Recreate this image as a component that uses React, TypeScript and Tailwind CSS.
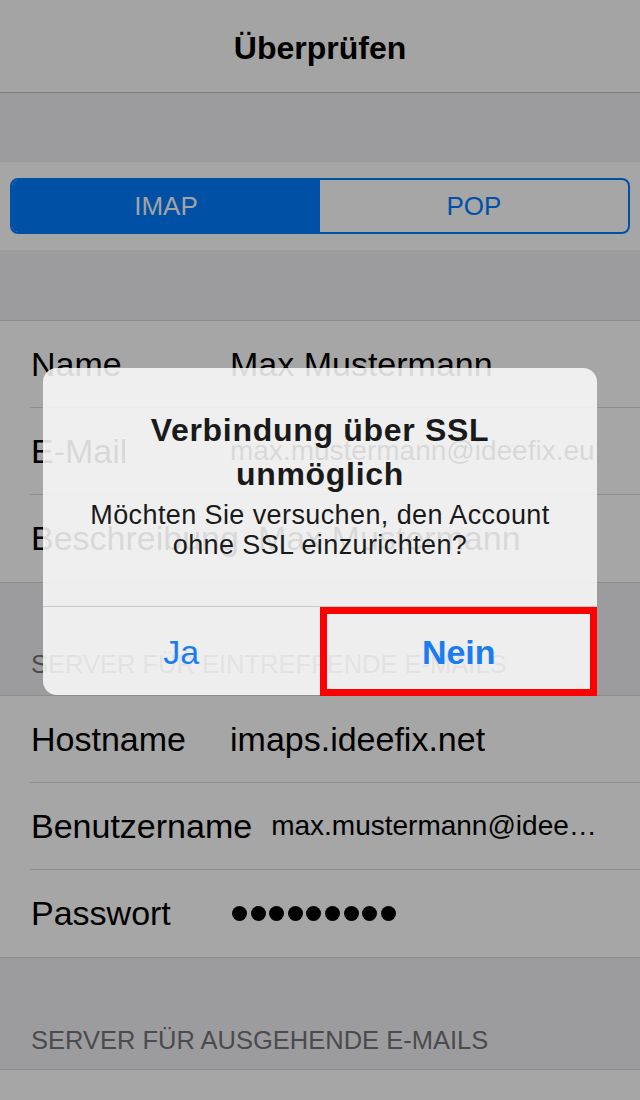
import React from "react";

function Row({ label, value, valueClass, h }: { label: string; value: React.ReactNode; valueClass?: string; h: string }) {
  return (
    <div className={`flex items-center pl-[31px] pr-[42px] ${h}`}>
      <div className="min-w-[180px] text-[34px] text-black whitespace-nowrap">{label}</div>
      <div className={`ml-[19px] whitespace-nowrap overflow-hidden text-black ${valueClass ?? "text-[34px]"}`}>{value}</div>
    </div>
  );
}

function Sep() {
  return <div className="ml-[30px] h-px bg-[#8d8d8d]" />;
}

export default function App() {
  return (
    <div className="relative w-[640px] h-[1100px] overflow-hidden bg-[#9c9c9e] font-['Liberation_Sans',Arial,sans-serif]">
      {/* Nav bar */}
      <div className="h-[93px] bg-[#a4a4a4] border-b border-[#7d7d7d] flex items-center justify-center pt-[4px]">
        <span className="text-[32px] font-bold text-black">Überprüfen</span>
      </div>
      <div className="h-[69px]" />
      {/* Segment band */}
      <div className="h-[88px] bg-[#a6a6a6] px-[10px] pt-[16px]">
        <div className="flex h-[56px] rounded-[8px] border-2 border-[#0051a6] overflow-hidden">
          <div className="flex-1 bg-[#0051a6] flex items-center justify-center text-[26px] text-[#a3a3a3]">IMAP</div>
          <div className="flex-1 flex items-center justify-center text-[26px] text-[#0051a6]">POP</div>
        </div>
      </div>
      <div className="h-[70px]" />
      {/* Group 1 */}
      <div className="bg-[#a6a6a6] border-y border-[#8d8d8d]">
        <Row label="Name" value="Max Mustermann" h="h-[86px]" />
        <Sep />
        <Row label="E-Mail" value="max.mustermann@ideefix.eu" valueClass="text-[28px]" h="h-[86px]" />
        <Sep />
        <Row label="Beschreibung" value="Max Mustermann" h="h-[87px]" />
      </div>
      <div className="h-[112px] flex items-end pl-[31px] pb-[16px]">
        <span className="text-[25.5px] leading-[30px] text-[#4b4b4d]">SERVER FÜR EINTREFFENDE E-MAILS</span>
      </div>
      {/* Group 2 */}
      <div className="bg-[#a6a6a6] border-y border-[#8d8d8d]">
        <Row label="Hostname" value="imaps.ideefix.net" h="h-[86px]" />
        <Sep />
        <Row label="Benutzername" value="max.mustermann@idee…" valueClass="text-[28px]" h="h-[86px]" />
        <Sep />
        <Row
          label="Passwort"
          value={
            <div className="flex gap-[3.6px] pl-[2px]">
              {[0, 1, 2, 3, 4, 5, 6, 7, 8].map((i) => (
                <div key={i} className="w-[15px] h-[15px] rounded-full bg-black" />
              ))}
            </div>
          }
          h="h-[87px]"
        />
      </div>
      <div className="h-[111px] flex items-end pl-[31px] pb-[14px]">
        <span className="text-[25.5px] leading-[30px] text-[#4b4b4d]">SERVER FÜR AUSGEHENDE E-MAILS</span>
      </div>
      <div className="bg-[#a6a6a6] border-t border-[#8d8d8d] h-[60px]" />

      {/* Alert */}
      <div className="absolute left-[43px] top-[368px] w-[554px] h-[327px] rounded-[14px] bg-[rgba(251,251,251,0.86)] flex flex-col">
        <div className="h-[238px] pt-[40px] flex flex-col items-center text-center">
          <div className="text-[32px] leading-[44px] font-bold tracking-[0.7px] text-[#1a1a1a]">
            Verbindung über SSL
            <br />
            unmöglich
          </div>
          <div className="mt-[4px] text-[27px] leading-[30px] tracking-[0.4px] text-[#1a1a1a]">
            Möchten Sie versuchen, den Account
            <br />
            ohne SSL einzurichten?
          </div>
        </div>
        <div className="h-px bg-[#c8c8cc]" />
        <div className="flex flex-1 pt-[3px]">
          <div className="flex-1 flex items-center justify-center text-[34px] text-[#1b7cf2]">Ja</div>
          <div className="w-px bg-[#c8c8cc]" />
          <div className="flex-1 flex items-center justify-center text-[34px] font-bold text-[#1b7cf2]">Nein</div>
        </div>
      </div>
      {/* Red highlight */}
      <div className="absolute left-[320px] top-[607px] w-[277px] h-[89px] border-[7px] border-[#ff0000]" />
    </div>
  );
}
